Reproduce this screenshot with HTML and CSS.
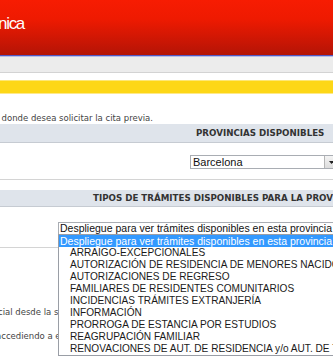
FILE: index.html
```html
<!DOCTYPE html>
<html lang="es">
<head>
    <meta charset="UTF-8">
    <meta name="viewport" content="width=device-width, initial-scale=1.0">
    <title>Cita previa</title>
    <link rel="stylesheet" href="styles.css">
</head>
<body>
    <div class="page">
        <header class="brand-bar">
            <div class="brand"><span class="brand-title">Sede Electrónica</span></div>
        </header>
        <nav class="nav-bar"></nav>
        <div class="notice"></div>

        <div class="intro"><span>Seleccione la provincia donde desea solicitar la cita previa.</span></div>

        <div class="th th-prov">PROVINCIAS DISPONIBLES</div>
        <div class="row row-prov">
            <div class="combo combo-prov">
                <span class="combo-text">Barcelona</span>
                <span class="combo-btn">
                    <svg width="5" height="3" viewBox="0 0 5 3"><path d="M0 0h5L2.5 3z" fill="#222"/></svg>
                </span>
            </div>
        </div>

        <div class="th th-tram">TIPOS DE TRÁMITES DISPONIBLES PARA LA PROVINCIA SELECCIONADA</div>
        <div class="row row-tram">
            <div class="combo combo-tram">
                <span class="combo-text">Despliegue para ver trámites disponibles en esta provincia</span>
                <ul class="listbox">
                    <li class="selected">Despliegue para ver trámites disponibles en esta provincia</li>
                    <li>ARRAIGO-EXCEPCIONALES</li>
                    <li>AUTORIZACIÓN DE RESIDENCIA DE MENORES NACIDOS EN ESPAÑA</li>
                    <li>AUTORIZACIONES DE REGRESO</li>
                    <li>FAMILIARES DE RESIDENTES COMUNITARIOS</li>
                    <li>INCIDENCIAS TRÁMITES EXTRANJERÍA</li>
                    <li>INFORMACIÓN</li>
                    <li>PRORROGA DE ESTANCIA POR ESTUDIOS</li>
                    <li>REAGRUPACIÓN FAMILIAR</li>
                    <li>RENOVACIONES DE AUT. DE RESIDENCIA y/o AUT. DE TRABAJO</li>
                </ul>
            </div>
        </div>

        <p class="note note-first">cial desde la sede electrónica</p>
        <p class="note note-second">accediendo a esta dirección</p>
    </div>
</body>
</html>
```
FILE: styles.css
```css
body {
    margin: 0;
    padding: 0;
    background: #fff;
}
.page {
    width: 333px;
    height: 360px;
    overflow: hidden;
    font-family: "DejaVu Sans", Verdana, sans-serif;
    font-size: 8.5px;
    color: #444;
}
.brand-bar {
    height: 55px;
    background: linear-gradient(#f71c02, #ee1a01 35%, #b41406);
    overflow: hidden;
}
.brand {
    width: 24px;
    display: flex;
    justify-content: flex-end;
    padding-top: 14px;
}
.brand-title {
    font-family: "Liberation Sans", Arial, sans-serif;
    font-size: 17px;
    line-height: 20px;
    letter-spacing: -1.3px;
    color: #fff;
    white-space: nowrap;
}
.nav-bar {
    height: 16px;
    border-top: 1px solid #5057c2;
    border-bottom: 1px solid #d3d3d3;
    background: linear-gradient(#b9bce6 0 1px, #ececec 1px);
}
.notice {
    margin-top: 7px;
    height: 12px;
    background: #fdd717;
    border-top: 1px solid #fde775;
    border-bottom: 1px solid #fee98b;
}
.intro {
    margin-top: 19px;
    width: 153px;
    display: flex;
    justify-content: flex-end;
    line-height: 11px;
    white-space: nowrap;
}
.th {
    background: #dfe4eb;
    border-bottom: 1px solid #c6cbd2;
    font-size: 8.7px;
    font-weight: bold;
    color: #333;
    white-space: nowrap;
}
.th-prov {
    height: 18px;
    line-height: 18px;
    padding-left: 196px;
}
.th-tram {
    margin-top: 10px;
    height: 16px;
    line-height: 16px;
    padding-left: 93px;
}
.row {
    border-bottom: 1px solid #d4d4d4;
}
.row-prov {
    height: 24px;
    padding-top: 12px;
}
.row-tram {
    height: 25px;
    padding-top: 15px;
}
.combo {
    display: flex;
    position: relative;
    box-sizing: border-box;
    border: 1px solid #a9adb3;
    background: #fff;
    font-family: "Liberation Sans", Arial, sans-serif;
    color: #111;
    white-space: nowrap;
}
.combo-text {
    flex: 1;
    overflow: hidden;
}
.combo-prov {
    margin-left: 190px;
    width: 148px;
    height: 14px;
    font-size: 11px;
    line-height: 12px;
}
.combo-prov .combo-text {
    padding-left: 2px;
}
.combo-btn {
    width: 12px;
    display: flex;
    align-items: center;
    justify-content: center;
    border-left: 1px solid #b5b5b5;
    background: linear-gradient(#f4f4f4, #dcdcdc);
}
.combo-tram {
    margin-left: 58px;
    width: 300px;
    height: 13px;
    font-size: 10.5px;
    line-height: 11px;
}
.combo-tram .combo-text {
    padding-left: 1px;
}
.listbox {
    position: absolute;
    top: 100%;
    left: -1px;
    width: 300px;
    margin: 0;
    padding: 0;
    list-style: none;
    background: #fff;
    border: 1px solid #9a9ea6;
    font-size: 10.1px;
}
.listbox li {
    height: 12px;
    line-height: 12px;
    padding-left: 11px;
    color: #1a1a1a;
}
.listbox li.selected {
    padding-left: 1px;
    font-size: 10.5px;
    background: #3399ff;
    color: #fff;
}
.note {
    margin: 0;
    line-height: 11px;
    white-space: nowrap;
}
.note-first {
    margin-top: 59px;
    margin-left: -2px;
}
.note-second {
    margin-top: 13px;
    margin-left: -4px;
}
```
